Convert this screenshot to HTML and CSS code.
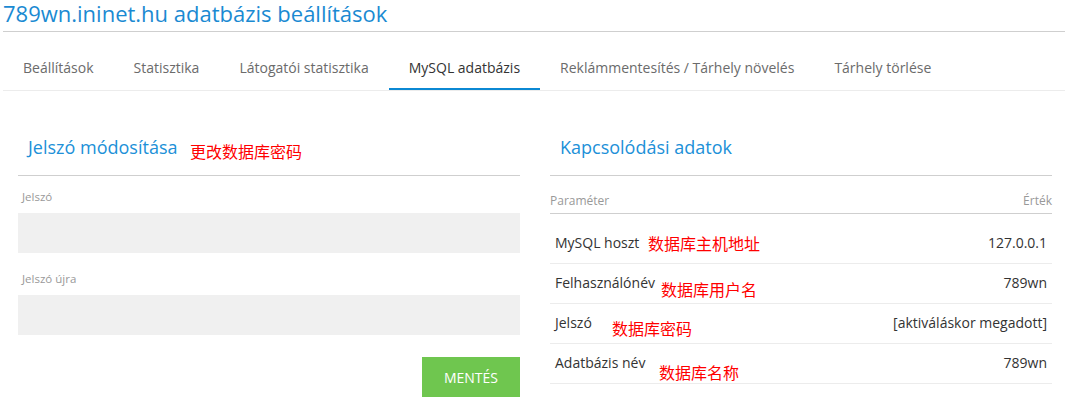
FILE: index.html
```html
<!DOCTYPE html>
<html lang="hu">
<head>
<meta charset="utf-8">
<title>789wn.ininet.hu adatbázis beállítások</title>
<link rel="stylesheet" href="styles.css">
</head>
<body>
<div class="page">
  <div class="title-bar">
    <h1 class="title">789wn.ininet.hu adatbázis beállítások</h1>
  </div>
  <nav class="tabs">
    <a class="tab">Beállítások</a>
    <a class="tab">Statisztika</a>
    <a class="tab">Látogatói statisztika</a>
    <a class="tab active">MySQL adatbázis</a>
    <a class="tab">Reklámmentesítés / Tárhely növelés</a>
    <a class="tab">Tárhely törlése</a>
  </nav>
  <div class="panels">
    <section class="panel">
      <h2 class="panel-title">Jelszó módosítása<span class="note note-title">更改数据库密码</span></h2>
      <label class="field-label first">Jelszó</label>
      <div class="input"></div>
      <label class="field-label">Jelszó újra</label>
      <div class="input"></div>
      <div class="actions"><button class="btn-save">MENTÉS</button></div>
    </section>
    <section class="panel">
      <h2 class="panel-title">Kapcsolódási adatok</h2>
      <div class="table">
        <div class="thead"><span>Paraméter</span><span>Érték</span></div>
        <div class="row row-first"><span>MySQL hoszt</span><span>127.0.0.1</span><span class="note note-r1">数据库主机地址</span></div>
        <div class="row"><span>Felhasználónév</span><span>789wn</span><span class="note note-r2">数据库用户名</span></div>
        <div class="row"><span>Jelszó</span><span>[aktiváláskor megadott]</span><span class="note note-r3">数据库密码</span></div>
        <div class="row"><span>Adatbázis név</span><span>789wn</span><span class="note note-r4">数据库名称</span></div>
      </div>
    </section>
  </div>
</div>
</body>
</html>
```
FILE: styles.css
```css
html, body {
  margin: 0;
  padding: 0;
  background: #fff;
  overflow: hidden;
}
body {
  font-family: "Open Sans", "Noto Sans", sans-serif;
  color: #333;
}
.page {
  padding-left: 3px;
}
.title-bar {
  border-bottom: 1px solid #cfcfcf;
}
.title {
  margin: 0;
  font-size: 22px;
  line-height: 26px;
  font-weight: 400;
  color: #1a8ad2;
  padding-bottom: 5px;
}
.tabs {
  display: flex;
  border-bottom: 1px solid #ececec;
}
.tab {
  font-size: 14px;
  line-height: 20px;
  color: #6b6b6b;
  padding: 26px 20px 10px;
  border-bottom: 2px solid transparent;
  cursor: pointer;
}
.tab.active {
  color: #333;
  border-bottom-color: #0b88d3;
}
.panels {
  display: grid;
  grid-template-columns: 502px 502px;
  column-gap: 30px;
  padding-left: 15px;
}
.panel {
  display: flex;
  flex-direction: column;
}
.panel-title {
  position: relative;
  margin: 44px 0 0;
  font-size: 18px;
  line-height: 24px;
  font-weight: 400;
  color: #2090d8;
  padding: 0 0 16px 10px;
  border-bottom: 1px solid #cfcfcf;
}
.note {
  position: absolute;
  font-family: "Noto Sans CJK SC", sans-serif;
  font-size: 16px;
  line-height: 16px;
  color: #ff0000;
  white-space: nowrap;
}
.note-title { left: 172px; top: 8px; }
.field-label {
  display: block;
  font-size: 11.5px;
  line-height: 16px;
  color: #999;
  padding-left: 4px;
  margin-top: 18px;
}
.field-label.first {
  margin-top: 13px;
}
.input {
  height: 40px;
  background: #f0f0f0;
  margin-top: 8px;
}
.actions {
  display: flex;
  justify-content: flex-end;
  margin-top: 22px;
}
.btn-save {
  width: 98px;
  height: 40px;
  border: 0;
  background: #6fc64f;
  color: #fff;
  font-family: "Open Sans", sans-serif;
  font-size: 14px;
  padding: 0;
}
.table {
  margin-top: 17px;
}
.thead {
  display: flex;
  justify-content: space-between;
  font-size: 12px;
  line-height: 16px;
  color: #999;
  padding-bottom: 4px;
  border-bottom: 1px solid #cfcfcf;
}
.row {
  position: relative;
  display: flex;
  justify-content: space-between;
  font-size: 14px;
  line-height: 18px;
  color: #333;
  padding: 10px 5px 11px;
  border-bottom: 1px solid #ececec;
}
.row-first {
  padding-top: 20px;
}
.note-r1 { left: 98px; top: 21px; }
.note-r2 { left: 111px; top: 17px; }
.note-r3 { left: 62px; top: 16px; }
.note-r4 { left: 109px; top: 20px; }
```
